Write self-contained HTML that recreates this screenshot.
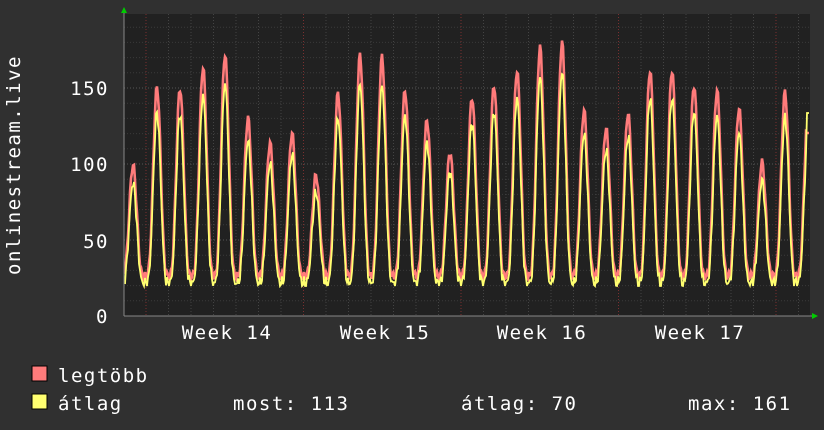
<!DOCTYPE html><html><head><style>
body{margin:0;background:#303030;width:824px;height:430px;overflow:hidden}
svg{display:block}
text{font-family:"DejaVu Sans Mono","Liberation Mono",monospace;fill:#fff;font-size:19px;letter-spacing:1.5px}
</style></head><body>
<svg id="s" width="824" height="430" xmlns="http://www.w3.org/2000/svg">
<rect x="124" y="14" width="686" height="302" fill="#212121"/>
<g id="grid"></g>
<polyline id="mx" fill="none" stroke="#ff7b7b" stroke-width="2.6"/>
<polyline id="av" fill="none" stroke="#ffff70" stroke-width="1.8"/>
<line x1="124" y1="316" x2="812" y2="316" stroke="#888"/>
<line x1="124" y1="316" x2="124" y2="12" stroke="#888"/>
<polygon points="121,13 127,13 124,7" fill="#0c0"/>
<polygon points="812,313 812,319 818,316" fill="#0c0"/>
<text x="109" y="323" text-anchor="end">0</text>
<text x="109" y="248" text-anchor="end">50</text>
<text x="109" y="171" text-anchor="end">100</text>
<text x="109" y="95" text-anchor="end">150</text>
<text transform="translate(20,165) rotate(-90)" text-anchor="middle">onlinestream.live</text>
<text x="227" y="339" text-anchor="middle">Week 14</text>
<text x="385" y="339" text-anchor="middle">Week 15</text>
<text x="542" y="339" text-anchor="middle">Week 16</text>
<text x="700" y="339" text-anchor="middle">Week 17</text>
<rect x="32" y="366" width="15" height="15" fill="#ff7b7b" stroke="#000"/>
<rect x="32" y="394" width="15" height="15" fill="#ffff70" stroke="#000"/>
<text x="58" y="382">legtöbb</text>
<text x="58" y="410">átlag</text>
<text x="233" y="410">most: 113</text>
<text x="461" y="410">átlag: 70</text>
<text x="688" y="410">max: 161</text>
</svg>
<script>
var g=document.getElementById('grid'),h='';
for(var v=10;v<=190;v+=10){var y=316-v*1.52;h+='<line x1="124" x2="810" y1="'+y+'" y2="'+y+'" stroke="'+(v%50?'#3a3a3a':'#555')+'" stroke-dasharray="1,2"/>';}
for(var x=146-22.5;x<810;x+=22.5){if(x<124)continue;var wk=Math.abs(((x-146)/157.5)-Math.round((x-146)/157.5))<0.01;h+='<line y1="14" y2="316" x1="'+x+'" x2="'+x+'" stroke="'+(wk?'#7a3030':'#444')+'" stroke-dasharray="1,2"/>';}
g.innerHTML=h;
var px=[133,157,180,203,225,248,270,292,316,338,360,382,405,427,450,472,494,517,540,562,584,606,628,650,672,694,717,739,762,785,808];
var py=[165,87,88,67,54,118,143,133,175,93,55,57,90,120,152,97,85,70,47,42,110,128,113,70,70,85,90,108,162,92,112];
function val(x){var best=0;for(var i=0;i<px.length;i++){var d=x-px[i];if(Math.abs(d)>12)continue;var pk=316-py[i];var sh=Math.pow(0.5+0.5*Math.cos(2*Math.PI*d/22.5),1.8);var v=40+(pk-40)*sh;if(v>best)best=v;}return best||40;}
var m='',a='';
for(var x=125;x<=809;x++){var v=val(x)+4*Math.sin(x*1.7);var w=v*0.9-3+3*Math.sin(x*2.3);if(x>806){v=316-133;w=316-113}m+=x+','+(316-v).toFixed(1)+' ';a+=x+','+(316-Math.max(w,30)).toFixed(1)+' ';}
document.getElementById('mx').setAttribute('points',m);
document.getElementById('av').setAttribute('points',a);
</script>
</body></html>
